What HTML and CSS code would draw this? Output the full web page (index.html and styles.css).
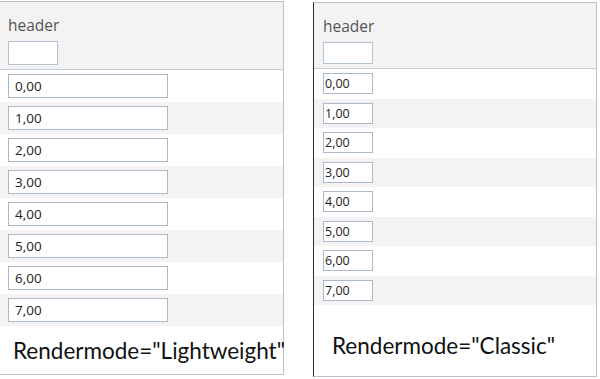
FILE: index.html
```html
<!DOCTYPE html>
<html lang="en">
<head>
  <meta charset="UTF-8">
  <title>Rendermode</title>
  <link rel="stylesheet" href="styles.css">
</head>
<body>
  <div class="grid lightweight">
    <div class="grid-header">
      <div class="header-title">header</div>
      <input type="text" class="filter-input">
    </div>
    <div class="row"><input type="text" class="cell-input" value="0,00"></div>
    <div class="row alt"><input type="text" class="cell-input" value="1,00"></div>
    <div class="row"><input type="text" class="cell-input" value="2,00"></div>
    <div class="row alt"><input type="text" class="cell-input" value="3,00"></div>
    <div class="row"><input type="text" class="cell-input" value="4,00"></div>
    <div class="row alt"><input type="text" class="cell-input" value="5,00"></div>
    <div class="row"><input type="text" class="cell-input" value="6,00"></div>
    <div class="row alt"><input type="text" class="cell-input" value="7,00"></div>
    <div class="caption">Rendermode="Lightweight"</div>
  </div>

  <div class="grid classic">
    <div class="grid-header">
      <div class="header-title">header</div>
      <input type="text" class="filter-input">
    </div>
    <div class="row"><input type="text" class="cell-input" value="0,00"></div>
    <div class="row alt"><input type="text" class="cell-input" value="1,00"></div>
    <div class="row"><input type="text" class="cell-input" value="2,00"></div>
    <div class="row alt"><input type="text" class="cell-input" value="3,00"></div>
    <div class="row"><input type="text" class="cell-input" value="4,00"></div>
    <div class="row alt"><input type="text" class="cell-input" value="5,00"></div>
    <div class="row"><input type="text" class="cell-input" value="6,00"></div>
    <div class="row alt"><input type="text" class="cell-input" value="7,00"></div>
    <div class="caption">Rendermode="Classic"</div>
  </div>
</body>
</html>
```

FILE: styles.css
```css
* {
  box-sizing: border-box;
}
body {
  margin: 0;
  background: #fff;
  display: flex;
  align-items: flex-start;
  font-family: 'Open Sans', sans-serif;
}
.grid {
  width: 284px;
  display: flex;
  flex-direction: column;
  border: 1px solid #b7c2cf;
  background: #fff;
}
.grid-header {
  display: flex;
  flex-direction: column;
  align-items: flex-start;
  background: #f3f3f3;
  border-bottom: 1px solid #c5cdd7;
}
.header-title {
  font-size: 15.5px;
  line-height: 20px;
  color: #555;
}
.filter-input {
  width: 50px;
  margin-top: 6px;
  border: 1px solid #b3c1d1;
  background: #fff;
  outline: none;
  padding: 0;
}
.row {
  display: flex;
  align-items: flex-start;
}
.row.alt {
  background: #f3f3f3;
}
.cell-input {
  border: 1px solid #abbacb;
  background: #fff;
  color: #222;
  outline: none;
  font-family: 'Open Sans', sans-serif;
}
.caption {
  font-family: Lato, 'Open Sans', sans-serif;
  font-size: 22.5px;
  line-height: 28px;
  color: #111;
  white-space: nowrap;
}

/* lightweight */
.lightweight {
  margin-top: 1px;
  border-left: none;
  height: 374px;
}
.lightweight .grid-header {
  height: 68px;
  padding: 13px 8px 0;
}
.lightweight .filter-input {
  height: 24px;
}
.lightweight .row {
  height: 32px;
  padding: 4px 8px 0;
}
.lightweight .cell-input {
  width: 160px;
  height: 24px;
  padding: 0 6px;
  font-size: 13.5px;
}
.lightweight .caption {
  padding: 11px 0 0 13px;
}

/* classic */
.classic {
  margin-left: 29px;
  margin-top: 2px;
  border-left-color: #2a2a2a;
  height: 375px;
}
.classic .grid-header {
  height: 66px;
  padding: 13px 9px 0;
}
.classic .filter-input {
  height: 22px;
}
.classic .row {
  height: 29.5px;
  padding: 4px 9px 0;
}
.classic .cell-input {
  width: 50px;
  height: 21px;
  padding: 0 1px;
  font-size: 12.5px;
}
.classic .caption {
  padding: 27px 0 0 18px;
}
```
